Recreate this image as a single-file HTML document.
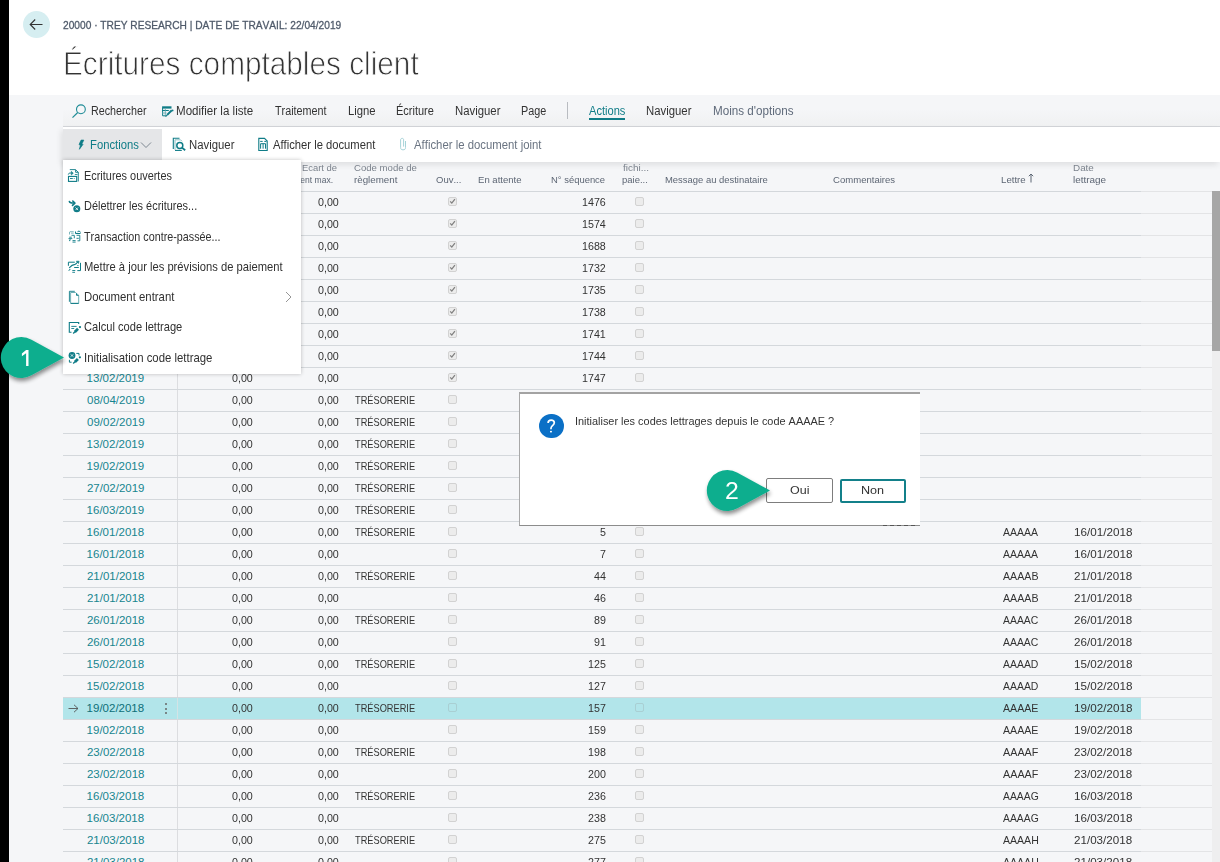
<!DOCTYPE html>
<html><head><meta charset="utf-8">
<style>
*{margin:0;padding:0;box-sizing:border-box}
html,body{width:1220px;height:862px;overflow:hidden}
body{position:relative;background:#f5f6f8;font-family:"Liberation Sans",sans-serif;color:#212121;font-kerning:none}
.abs{position:absolute}
.t{position:absolute;white-space:nowrap;transform-origin:0 0}
.mz{z-index:11}
.dz{z-index:12}
.cz{z-index:21}
#blk{position:absolute;left:0;top:0;width:9px;height:862px;background:#000;z-index:5}
#top{position:absolute;left:0;top:0;width:1220px;height:95px;background:#fff}
#back{position:absolute;left:23px;top:11px;width:27px;height:27px;border-radius:50%;background:#d6eef1;z-index:6}
#abline{position:absolute;left:63px;top:126px;width:1157px;height:1px;background:#d3d5d9}
#band{position:absolute;left:63px;top:127px;width:1157px;height:35px;background:#fff;box-shadow:-2px 3px 6px rgba(0,0,0,0.09)}
#fonc{position:absolute;left:63px;top:129px;width:99px;height:33px;background:#e5e6e8}
#hdline{position:absolute;left:63px;top:191px;width:1078px;height:1px;background:#d3d7db}
#hdline2{position:absolute;left:1141px;top:191px;width:71px;height:1px;background:#e3e4e6}
.cb{position:absolute;width:9px;height:9px;border:1px solid #d2d2d2;border-radius:2px;background:#ececec}
#vsep{position:absolute;left:177px;top:192px;width:1px;height:670px;background:#dcdde0}
#sb{position:absolute;left:1212px;top:191px;width:8px;height:160px;background:#a6a6a6}
#sbt{position:absolute;left:1212px;top:191px;width:8px;height:671px;background:#eeeeef}
#menu{position:absolute;left:63px;top:160px;width:238px;height:214px;background:#fff;box-shadow:0 0 4px rgba(0,0,0,0.24);z-index:10}
.ic{position:absolute;z-index:11}
#dlg{position:absolute;left:519px;top:392px;width:401px;height:134px;background:#fff;border-left:1px solid #a8a8a8;border-top:2px solid #a3a3a3;border-bottom:1px solid #8c8c8c;z-index:10}
#q{position:absolute;left:539.3px;top:414.1px;width:24.4px;height:24.4px;border-radius:50%;background:#0b70c6;z-index:11}
.btn{position:absolute;top:478px;height:25px;background:#fff;z-index:11;border-radius:2px}
#oui{left:766px;width:67px;border:1px solid #7d7d7d}
#non{left:840px;width:66px;top:478.5px;height:24px;border:2px solid #13808a}
.call{position:absolute;z-index:20;overflow:visible}
</style></head><body>
<div id="top"></div>
<div class="abs" style="left:63px;top:95px;width:1157px;height:31px;background:linear-gradient(#f5f6f8 0,#f5f6f8 14px,#f0f1f2 31px)"></div>
<div id="blk"></div>
<div id="back"></div>
<svg class="abs" style="left:29px;top:18px;z-index:7" width="15" height="13" viewBox="0 0 15 13"><path d="M1.2 6.5 H13.5 M6.2 1.5 L1.2 6.5 L6.2 11.5" fill="none" stroke="#333" stroke-width="1.1"/></svg>
<span class="t" style="left:63.19px;top:19.88px;font-size:11.3px;line-height:11px;transform:scaleX(0.9012);color:#4f5a6a;-webkit-text-stroke:0.3px #4f5a6a;">20000 · TREY RESEARCH | DATE DE TRAVAIL: 22/04/2019</span>
<span class="t" style="left:62.56px;top:45.72px;font-size:34px;line-height:34px;transform:scaleX(0.8754);color:#333;-webkit-text-stroke:0.9px #fff;">Écritures comptables client</span>

<!-- action bar -->
<svg class="abs" style="left:70px;top:100px" width="20" height="20" viewBox="0 0 20 20"><circle cx="10.9" cy="9.3" r="4.4" fill="none" stroke="#1f8c96" stroke-width="1.1"/><path d="M7.7 12.5 L2.5 17.7" stroke="#1f8c96" stroke-width="1.2" fill="none"/></svg>
<svg class="abs" style="left:158px;top:100px" width="20" height="20" viewBox="0 0 20 20" fill="none" stroke="#0f7c87"><rect x="4.1" y="6.3" width="9.4" height="2.3" fill="#0f7c87" stroke="none"/><path d="M4.6 8 V15.8 H8" stroke-width="1"/><path d="M4 10.5 H10.8" stroke-width="1"/><path d="M4 13 H8.5 M7.3 9 V15" stroke-width="0.8" stroke="#5ea6ad"/><path d="M9.2 14.9 L13.8 10.3" stroke-width="2"/><path d="M7.6 16.6 L9.3 14.9" stroke-width="1.1"/><circle cx="14.6" cy="10.4" r="0.9" fill="#0f7c87" stroke="none"/></svg>
<div id="abline"></div>
<div id="band"></div>
<div id="fonc"></div>
<svg class="abs" style="left:70px;top:134px" width="20" height="20" viewBox="0 0 20 20"><path d="M11.1 6.1 L13.8 6.1 L12.1 9.6 L12.9 10.5 L9.4 15.3 L10.4 11.3 L9 10.6 Z" fill="#0f7c87" stroke="#0f7c87" stroke-width="0.7" stroke-linejoin="round"/></svg>
<svg class="abs" style="left:140px;top:141px" width="12" height="8" viewBox="0 0 12 8"><path d="M1 1.5 L6 6.5 L11 1.5" fill="none" stroke="#6f7a86" stroke-width="0.9"/></svg>
<svg class="abs" style="left:168px;top:134px" width="20" height="20" viewBox="0 0 20 20" fill="none" stroke="#0f7c87"><path d="M11.5 4.3 H5.3 V15" stroke-width="1.1"/><path d="M7 15.8 V5.8 H12.5 L14 7.3" stroke-width="0.9" stroke="#7fb8be"/><path d="M7 16.4 H13.8" stroke-width="1.1"/><circle cx="11.8" cy="11.4" r="3" stroke-width="1.5"/><path d="M13.9 13.6 L17.2 16.2" stroke-width="1.8"/></svg>
<svg class="abs" style="left:252px;top:134px" width="20" height="20" viewBox="0 0 20 20" fill="none" stroke="#0f7c87"><path d="M6.8 4.4 H12.5 L15.2 7 V16.5 H6.8 Z" stroke-width="1.1"/><path d="M8.2 7.4 H10.7 M12.3 7.4 H14.5" stroke-width="1"/><path d="M8.6 14.7 V9.7 H13.5 V14.7 M11.1 9.7 V14.7" stroke-width="1"/></svg>
<svg class="abs" style="left:392px;top:134px" width="20" height="20" viewBox="0 0 20 20" fill="none" stroke="#a6d3d8" stroke-width="1"><path d="M13.5 7 V13.5 C13.5 15.5 12.5 15.8 11 15.8 C9.5 15.8 8.6 15.3 8.6 13.5 V6 C8.6 4.8 9.2 4.4 10.2 4.4 C11.2 4.4 11.6 4.9 11.6 6 V12.6"/></svg>
<span class="t" style="left:90.82px;top:105.04px;font-size:12px;line-height:12px;transform:scaleX(0.8941);color:#333;">Rechercher</span>
<span class="t" style="left:175.65px;top:105.04px;font-size:12px;line-height:12px;transform:scaleX(0.9642);color:#333;">Modifier la liste</span>
<span class="t" style="left:274.76px;top:105.04px;font-size:12px;line-height:12px;transform:scaleX(0.8983);color:#333;">Traitement</span>
<span class="t" style="left:347.87px;top:105.04px;font-size:12px;line-height:12px;transform:scaleX(0.9410);color:#333;">Ligne</span>
<span class="t" style="left:396.30px;top:105.04px;font-size:12px;line-height:12px;transform:scaleX(0.9165);color:#333;">Écriture</span>
<span class="t" style="left:455.27px;top:105.04px;font-size:12px;line-height:12px;transform:scaleX(0.9458);color:#333;">Naviguer</span>
<span class="t" style="left:521.41px;top:105.04px;font-size:12px;line-height:12px;transform:scaleX(0.9016);color:#333;">Page</span>
<span class="t" style="left:588.88px;top:105.04px;font-size:12px;line-height:12px;transform:scaleX(0.9256);color:#0f7c87;">Actions</span>
<span class="t" style="left:646.27px;top:105.04px;font-size:12px;line-height:12px;transform:scaleX(0.9458);color:#333;">Naviguer</span>
<span class="t" style="left:712.74px;top:105.04px;font-size:12px;line-height:12px;transform:scaleX(0.9708);color:#5f6a7a;">Moins d'options</span>
<span class="t" style="left:89.58px;top:139.24px;font-size:12px;line-height:12px;transform:scaleX(0.9386);color:#0f7c87;">Fonctions</span>
<span class="t" style="left:188.77px;top:139.24px;font-size:12px;line-height:12px;transform:scaleX(0.9458);color:#333;">Naviguer</span>
<span class="t" style="left:272.98px;top:139.24px;font-size:12px;line-height:12px;transform:scaleX(0.9352);color:#333;">Afficher le document</span>
<span class="t" style="left:413.78px;top:139.24px;font-size:12px;line-height:12px;transform:scaleX(0.9463);color:#6a7482;">Afficher le document joint</span>
<div class="abs" style="left:567px;top:102px;width:1px;height:17px;background:#b9bcc1"></div>
<div class="abs" style="left:589px;top:118px;width:36px;height:2px;background:#0f7c87"></div>

<!-- grid -->
<span class="t" style="left:302.13px;top:163.88px;font-size:9.3px;line-height:9px;transform:scaleX(1.0132);color:#7b828c;">Ecart de</span>
<span class="t" style="left:276.87px;top:175.88px;font-size:9.3px;line-height:9px;transform:scaleX(0.9200);color:#5d6674;">paiement max.</span>
<span class="t" style="left:354.41px;top:163.88px;font-size:9.3px;line-height:9px;transform:scaleX(1.0312);color:#7b828c;">Code mode de</span>
<span class="t" style="left:354.25px;top:175.88px;font-size:9.3px;line-height:9px;transform:scaleX(1.0499);color:#5d6674;">règlement</span>
<span class="t" style="left:435.55px;top:175.88px;font-size:9.3px;line-height:9px;transform:scaleX(1.0205);color:#5d6674;">Ouv...</span>
<span class="t" style="left:478.12px;top:175.88px;font-size:9.3px;line-height:9px;transform:scaleX(1.0285);color:#5d6674;">En attente</span>
<span class="t" style="left:551.03px;top:175.88px;font-size:9.3px;line-height:9px;transform:scaleX(1.0139);color:#5d6674;">N° séquence</span>
<span class="t" style="left:622.86px;top:163.88px;font-size:9.3px;line-height:9px;transform:scaleX(1.0725);color:#7b828c;">fichi...</span>
<span class="t" style="left:622.39px;top:175.88px;font-size:9.3px;line-height:9px;transform:scaleX(1.0215);color:#5d6674;">paie...</span>
<span class="t" style="left:665.43px;top:175.88px;font-size:9.3px;line-height:9px;transform:scaleX(1.0145);color:#5d6674;">Message au destinataire</span>
<span class="t" style="left:832.91px;top:175.88px;font-size:9.3px;line-height:9px;transform:scaleX(1.0275);color:#5d6674;">Commentaires</span>
<span class="t" style="left:1001.21px;top:175.88px;font-size:9.3px;line-height:9px;transform:scaleX(1.0396);color:#5d6674;">Lettre</span>
<svg class="abs" style="left:1028px;top:173px" width="6" height="10" viewBox="0 0 6 10"><path d="M3 9.5 V1 M0.8 3.2 L3 1 L5.2 3.2" fill="none" stroke="#5d6674" stroke-width="1"/></svg>
<span class="t" style="left:1072.89px;top:163.88px;font-size:9.3px;line-height:9px;transform:scaleX(1.0613);color:#7b828c;">Date</span>
<span class="t" style="left:1073.03px;top:175.88px;font-size:9.3px;line-height:9px;transform:scaleX(1.0674);color:#5d6674;">lettrage</span>
<div id="hdline"></div><div id="hdline2"></div>
<div id="sbt"></div>
<div id="sb"></div>
<div id="vsep"></div>
<div class="abs" style="left:63px;top:698px;width:1078px;height:21px;background:#b2e5ea"></div>
<div class="abs" style="left:63px;top:213px;width:1078px;height:1px;background:#d4d8dc"></div>
<div class="abs" style="left:1141px;top:213px;width:71px;height:1px;background:#e3e4e6"></div>
<div class="abs" style="left:63px;top:235px;width:1078px;height:1px;background:#d4d8dc"></div>
<div class="abs" style="left:1141px;top:235px;width:71px;height:1px;background:#e3e4e6"></div>
<div class="abs" style="left:63px;top:257px;width:1078px;height:1px;background:#d4d8dc"></div>
<div class="abs" style="left:1141px;top:257px;width:71px;height:1px;background:#e3e4e6"></div>
<div class="abs" style="left:63px;top:279px;width:1078px;height:1px;background:#d4d8dc"></div>
<div class="abs" style="left:1141px;top:279px;width:71px;height:1px;background:#e3e4e6"></div>
<div class="abs" style="left:63px;top:301px;width:1078px;height:1px;background:#d4d8dc"></div>
<div class="abs" style="left:1141px;top:301px;width:71px;height:1px;background:#e3e4e6"></div>
<div class="abs" style="left:63px;top:323px;width:1078px;height:1px;background:#d4d8dc"></div>
<div class="abs" style="left:1141px;top:323px;width:71px;height:1px;background:#e3e4e6"></div>
<div class="abs" style="left:63px;top:345px;width:1078px;height:1px;background:#d4d8dc"></div>
<div class="abs" style="left:1141px;top:345px;width:71px;height:1px;background:#e3e4e6"></div>
<div class="abs" style="left:63px;top:367px;width:1078px;height:1px;background:#d4d8dc"></div>
<div class="abs" style="left:1141px;top:367px;width:71px;height:1px;background:#e3e4e6"></div>
<div class="abs" style="left:63px;top:389px;width:1078px;height:1px;background:#d4d8dc"></div>
<div class="abs" style="left:1141px;top:389px;width:71px;height:1px;background:#e3e4e6"></div>
<div class="abs" style="left:63px;top:411px;width:1078px;height:1px;background:#d4d8dc"></div>
<div class="abs" style="left:1141px;top:411px;width:71px;height:1px;background:#e3e4e6"></div>
<div class="abs" style="left:63px;top:433px;width:1078px;height:1px;background:#d4d8dc"></div>
<div class="abs" style="left:1141px;top:433px;width:71px;height:1px;background:#e3e4e6"></div>
<div class="abs" style="left:63px;top:455px;width:1078px;height:1px;background:#d4d8dc"></div>
<div class="abs" style="left:1141px;top:455px;width:71px;height:1px;background:#e3e4e6"></div>
<div class="abs" style="left:63px;top:477px;width:1078px;height:1px;background:#d4d8dc"></div>
<div class="abs" style="left:1141px;top:477px;width:71px;height:1px;background:#e3e4e6"></div>
<div class="abs" style="left:63px;top:499px;width:1078px;height:1px;background:#d4d8dc"></div>
<div class="abs" style="left:1141px;top:499px;width:71px;height:1px;background:#e3e4e6"></div>
<div class="abs" style="left:63px;top:521px;width:1078px;height:1px;background:#d4d8dc"></div>
<div class="abs" style="left:1141px;top:521px;width:71px;height:1px;background:#e3e4e6"></div>
<div class="abs" style="left:63px;top:543px;width:1078px;height:1px;background:#d4d8dc"></div>
<div class="abs" style="left:1141px;top:543px;width:71px;height:1px;background:#e3e4e6"></div>
<div class="abs" style="left:63px;top:565px;width:1078px;height:1px;background:#d4d8dc"></div>
<div class="abs" style="left:1141px;top:565px;width:71px;height:1px;background:#e3e4e6"></div>
<div class="abs" style="left:63px;top:587px;width:1078px;height:1px;background:#d4d8dc"></div>
<div class="abs" style="left:1141px;top:587px;width:71px;height:1px;background:#e3e4e6"></div>
<div class="abs" style="left:63px;top:609px;width:1078px;height:1px;background:#d4d8dc"></div>
<div class="abs" style="left:1141px;top:609px;width:71px;height:1px;background:#e3e4e6"></div>
<div class="abs" style="left:63px;top:631px;width:1078px;height:1px;background:#d4d8dc"></div>
<div class="abs" style="left:1141px;top:631px;width:71px;height:1px;background:#e3e4e6"></div>
<div class="abs" style="left:63px;top:653px;width:1078px;height:1px;background:#d4d8dc"></div>
<div class="abs" style="left:1141px;top:653px;width:71px;height:1px;background:#e3e4e6"></div>
<div class="abs" style="left:63px;top:675px;width:1078px;height:1px;background:#d4d8dc"></div>
<div class="abs" style="left:1141px;top:675px;width:71px;height:1px;background:#e3e4e6"></div>
<div class="abs" style="left:63px;top:697px;width:1078px;height:1px;background:#d4d8dc"></div>
<div class="abs" style="left:1141px;top:697px;width:71px;height:1px;background:#e3e4e6"></div>
<div class="abs" style="left:63px;top:719px;width:1078px;height:1px;background:#d4d8dc"></div>
<div class="abs" style="left:1141px;top:719px;width:71px;height:1px;background:#e3e4e6"></div>
<div class="abs" style="left:63px;top:741px;width:1078px;height:1px;background:#d4d8dc"></div>
<div class="abs" style="left:1141px;top:741px;width:71px;height:1px;background:#e3e4e6"></div>
<div class="abs" style="left:63px;top:763px;width:1078px;height:1px;background:#d4d8dc"></div>
<div class="abs" style="left:1141px;top:763px;width:71px;height:1px;background:#e3e4e6"></div>
<div class="abs" style="left:63px;top:785px;width:1078px;height:1px;background:#d4d8dc"></div>
<div class="abs" style="left:1141px;top:785px;width:71px;height:1px;background:#e3e4e6"></div>
<div class="abs" style="left:63px;top:807px;width:1078px;height:1px;background:#d4d8dc"></div>
<div class="abs" style="left:1141px;top:807px;width:71px;height:1px;background:#e3e4e6"></div>
<div class="abs" style="left:63px;top:829px;width:1078px;height:1px;background:#d4d8dc"></div>
<div class="abs" style="left:1141px;top:829px;width:71px;height:1px;background:#e3e4e6"></div>
<div class="abs" style="left:63px;top:851px;width:1078px;height:1px;background:#d4d8dc"></div>
<div class="abs" style="left:1141px;top:851px;width:71px;height:1px;background:#e3e4e6"></div>
<div class="abs" style="left:63px;top:873px;width:1078px;height:1px;background:#d4d8dc"></div>
<div class="abs" style="left:1141px;top:873px;width:71px;height:1px;background:#e3e4e6"></div>
<span class="t" style="left:231.60px;top:195.72px;font-size:11.5px;line-height:12px;transform:scaleX(0.9300);color:#333333;">0,00</span>
<span class="t" style="left:317.60px;top:195.72px;font-size:11.5px;line-height:12px;transform:scaleX(0.9300);color:#333333;">0,00</span>
<div class="cb" style="left:448px;top:196.5px"><svg width="9" height="9" viewBox="0 0 9 9" style="position:absolute;left:-1px;top:-1px"><path d="M2.2 4.4 L3.8 6.1 L6.9 2.2" fill="none" stroke="#808080" stroke-width="1.3"/></svg></div>
<span class="t" style="left:582.38px;top:195.72px;font-size:11.5px;line-height:12px;transform:scaleX(0.9300);color:#333333;">1476</span>
<div class="cb" style="left:635px;top:196.5px"></div>
<span class="t" style="left:231.60px;top:217.72px;font-size:11.5px;line-height:12px;transform:scaleX(0.9300);color:#333333;">0,00</span>
<span class="t" style="left:317.60px;top:217.72px;font-size:11.5px;line-height:12px;transform:scaleX(0.9300);color:#333333;">0,00</span>
<div class="cb" style="left:448px;top:218.5px"><svg width="9" height="9" viewBox="0 0 9 9" style="position:absolute;left:-1px;top:-1px"><path d="M2.2 4.4 L3.8 6.1 L6.9 2.2" fill="none" stroke="#808080" stroke-width="1.3"/></svg></div>
<span class="t" style="left:582.22px;top:217.72px;font-size:11.5px;line-height:12px;transform:scaleX(0.9300);color:#333333;">1574</span>
<div class="cb" style="left:635px;top:218.5px"></div>
<span class="t" style="left:231.60px;top:239.72px;font-size:11.5px;line-height:12px;transform:scaleX(0.9300);color:#333333;">0,00</span>
<span class="t" style="left:317.60px;top:239.72px;font-size:11.5px;line-height:12px;transform:scaleX(0.9300);color:#333333;">0,00</span>
<div class="cb" style="left:448px;top:240.5px"><svg width="9" height="9" viewBox="0 0 9 9" style="position:absolute;left:-1px;top:-1px"><path d="M2.2 4.4 L3.8 6.1 L6.9 2.2" fill="none" stroke="#808080" stroke-width="1.3"/></svg></div>
<span class="t" style="left:582.37px;top:239.72px;font-size:11.5px;line-height:12px;transform:scaleX(0.9300);color:#333333;">1688</span>
<div class="cb" style="left:635px;top:240.5px"></div>
<span class="t" style="left:231.60px;top:261.72px;font-size:11.5px;line-height:12px;transform:scaleX(0.9300);color:#333333;">0,00</span>
<span class="t" style="left:317.60px;top:261.72px;font-size:11.5px;line-height:12px;transform:scaleX(0.9300);color:#333333;">0,00</span>
<div class="cb" style="left:448px;top:262.5px"><svg width="9" height="9" viewBox="0 0 9 9" style="position:absolute;left:-1px;top:-1px"><path d="M2.2 4.4 L3.8 6.1 L6.9 2.2" fill="none" stroke="#808080" stroke-width="1.3"/></svg></div>
<span class="t" style="left:582.45px;top:261.72px;font-size:11.5px;line-height:12px;transform:scaleX(0.9300);color:#333333;">1732</span>
<div class="cb" style="left:635px;top:262.5px"></div>
<span class="t" style="left:231.60px;top:283.72px;font-size:11.5px;line-height:12px;transform:scaleX(0.9300);color:#333333;">0,00</span>
<span class="t" style="left:317.60px;top:283.72px;font-size:11.5px;line-height:12px;transform:scaleX(0.9300);color:#333333;">0,00</span>
<div class="cb" style="left:448px;top:284.5px"><svg width="9" height="9" viewBox="0 0 9 9" style="position:absolute;left:-1px;top:-1px"><path d="M2.2 4.4 L3.8 6.1 L6.9 2.2" fill="none" stroke="#808080" stroke-width="1.3"/></svg></div>
<span class="t" style="left:582.36px;top:283.72px;font-size:11.5px;line-height:12px;transform:scaleX(0.9300);color:#333333;">1735</span>
<div class="cb" style="left:635px;top:284.5px"></div>
<span class="t" style="left:231.60px;top:305.72px;font-size:11.5px;line-height:12px;transform:scaleX(0.9300);color:#333333;">0,00</span>
<span class="t" style="left:317.60px;top:305.72px;font-size:11.5px;line-height:12px;transform:scaleX(0.9300);color:#333333;">0,00</span>
<div class="cb" style="left:448px;top:306.5px"><svg width="9" height="9" viewBox="0 0 9 9" style="position:absolute;left:-1px;top:-1px"><path d="M2.2 4.4 L3.8 6.1 L6.9 2.2" fill="none" stroke="#808080" stroke-width="1.3"/></svg></div>
<span class="t" style="left:582.37px;top:305.72px;font-size:11.5px;line-height:12px;transform:scaleX(0.9300);color:#333333;">1738</span>
<div class="cb" style="left:635px;top:306.5px"></div>
<span class="t" style="left:231.60px;top:327.72px;font-size:11.5px;line-height:12px;transform:scaleX(0.9300);color:#333333;">0,00</span>
<span class="t" style="left:317.60px;top:327.72px;font-size:11.5px;line-height:12px;transform:scaleX(0.9300);color:#333333;">0,00</span>
<div class="cb" style="left:448px;top:328.5px"><svg width="9" height="9" viewBox="0 0 9 9" style="position:absolute;left:-1px;top:-1px"><path d="M2.2 4.4 L3.8 6.1 L6.9 2.2" fill="none" stroke="#808080" stroke-width="1.3"/></svg></div>
<span class="t" style="left:582.43px;top:327.72px;font-size:11.5px;line-height:12px;transform:scaleX(0.9300);color:#333333;">1741</span>
<div class="cb" style="left:635px;top:328.5px"></div>
<span class="t" style="left:231.60px;top:349.72px;font-size:11.5px;line-height:12px;transform:scaleX(0.9300);color:#333333;">0,00</span>
<span class="t" style="left:317.60px;top:349.72px;font-size:11.5px;line-height:12px;transform:scaleX(0.9300);color:#333333;">0,00</span>
<div class="cb" style="left:448px;top:350.5px"><svg width="9" height="9" viewBox="0 0 9 9" style="position:absolute;left:-1px;top:-1px"><path d="M2.2 4.4 L3.8 6.1 L6.9 2.2" fill="none" stroke="#808080" stroke-width="1.3"/></svg></div>
<span class="t" style="left:582.22px;top:349.72px;font-size:11.5px;line-height:12px;transform:scaleX(0.9300);color:#333333;">1744</span>
<div class="cb" style="left:635px;top:350.5px"></div>
<span class="t" style="left:86.62px;top:371.72px;font-size:11.5px;line-height:12px;color:#15858f;">13/02/2019</span>
<span class="t" style="left:231.60px;top:371.72px;font-size:11.5px;line-height:12px;transform:scaleX(0.9300);color:#333333;">0,00</span>
<span class="t" style="left:317.60px;top:371.72px;font-size:11.5px;line-height:12px;transform:scaleX(0.9300);color:#333333;">0,00</span>
<div class="cb" style="left:448px;top:372.5px"><svg width="9" height="9" viewBox="0 0 9 9" style="position:absolute;left:-1px;top:-1px"><path d="M2.2 4.4 L3.8 6.1 L6.9 2.2" fill="none" stroke="#808080" stroke-width="1.3"/></svg></div>
<span class="t" style="left:582.45px;top:371.72px;font-size:11.5px;line-height:12px;transform:scaleX(0.9300);color:#333333;">1747</span>
<div class="cb" style="left:635px;top:372.5px"></div>
<span class="t" style="left:87.05px;top:393.72px;font-size:11.5px;line-height:12px;color:#15858f;">08/04/2019</span>
<span class="t" style="left:231.60px;top:393.72px;font-size:11.5px;line-height:12px;transform:scaleX(0.9300);color:#333333;">0,00</span>
<span class="t" style="left:317.60px;top:393.72px;font-size:11.5px;line-height:12px;transform:scaleX(0.9300);color:#333333;">0,00</span>
<span class="t" style="left:355.29px;top:393.72px;font-size:11.5px;line-height:12px;transform:scaleX(0.8040);color:#333333;">TRÉSORERIE</span>
<div class="cb" style="left:448px;top:394.5px"></div>
<div class="cb" style="left:635px;top:394.5px"></div>
<span class="t" style="left:87.05px;top:415.72px;font-size:11.5px;line-height:12px;color:#15858f;">09/02/2019</span>
<span class="t" style="left:231.60px;top:415.72px;font-size:11.5px;line-height:12px;transform:scaleX(0.9300);color:#333333;">0,00</span>
<span class="t" style="left:317.60px;top:415.72px;font-size:11.5px;line-height:12px;transform:scaleX(0.9300);color:#333333;">0,00</span>
<span class="t" style="left:355.29px;top:415.72px;font-size:11.5px;line-height:12px;transform:scaleX(0.8040);color:#333333;">TRÉSORERIE</span>
<div class="cb" style="left:448px;top:416.5px"></div>
<div class="cb" style="left:635px;top:416.5px"></div>
<span class="t" style="left:86.62px;top:437.72px;font-size:11.5px;line-height:12px;color:#15858f;">13/02/2019</span>
<span class="t" style="left:231.60px;top:437.72px;font-size:11.5px;line-height:12px;transform:scaleX(0.9300);color:#333333;">0,00</span>
<span class="t" style="left:317.60px;top:437.72px;font-size:11.5px;line-height:12px;transform:scaleX(0.9300);color:#333333;">0,00</span>
<span class="t" style="left:355.29px;top:437.72px;font-size:11.5px;line-height:12px;transform:scaleX(0.8040);color:#333333;">TRÉSORERIE</span>
<div class="cb" style="left:448px;top:438.5px"></div>
<div class="cb" style="left:635px;top:438.5px"></div>
<span class="t" style="left:86.62px;top:459.72px;font-size:11.5px;line-height:12px;color:#15858f;">19/02/2019</span>
<span class="t" style="left:231.60px;top:459.72px;font-size:11.5px;line-height:12px;transform:scaleX(0.9300);color:#333333;">0,00</span>
<span class="t" style="left:317.60px;top:459.72px;font-size:11.5px;line-height:12px;transform:scaleX(0.9300);color:#333333;">0,00</span>
<span class="t" style="left:355.29px;top:459.72px;font-size:11.5px;line-height:12px;transform:scaleX(0.8040);color:#333333;">TRÉSORERIE</span>
<div class="cb" style="left:448px;top:460.5px"></div>
<div class="cb" style="left:635px;top:460.5px"></div>
<span class="t" style="left:86.92px;top:481.72px;font-size:11.5px;line-height:12px;color:#15858f;">27/02/2019</span>
<span class="t" style="left:231.60px;top:481.72px;font-size:11.5px;line-height:12px;transform:scaleX(0.9300);color:#333333;">0,00</span>
<span class="t" style="left:317.60px;top:481.72px;font-size:11.5px;line-height:12px;transform:scaleX(0.9300);color:#333333;">0,00</span>
<span class="t" style="left:355.29px;top:481.72px;font-size:11.5px;line-height:12px;transform:scaleX(0.8040);color:#333333;">TRÉSORERIE</span>
<div class="cb" style="left:448px;top:482.5px"></div>
<div class="cb" style="left:635px;top:482.5px"></div>
<span class="t" style="left:86.62px;top:503.72px;font-size:11.5px;line-height:12px;color:#15858f;">16/03/2019</span>
<span class="t" style="left:231.60px;top:503.72px;font-size:11.5px;line-height:12px;transform:scaleX(0.9300);color:#333333;">0,00</span>
<span class="t" style="left:317.60px;top:503.72px;font-size:11.5px;line-height:12px;transform:scaleX(0.9300);color:#333333;">0,00</span>
<span class="t" style="left:355.29px;top:503.72px;font-size:11.5px;line-height:12px;transform:scaleX(0.8040);color:#333333;">TRÉSORERIE</span>
<div class="cb" style="left:448px;top:504.5px"></div>
<div class="cb" style="left:635px;top:504.5px"></div>
<span class="t" style="left:86.62px;top:525.72px;font-size:11.5px;line-height:12px;color:#15858f;">16/01/2018</span>
<span class="t" style="left:231.60px;top:525.72px;font-size:11.5px;line-height:12px;transform:scaleX(0.9300);color:#333333;">0,00</span>
<span class="t" style="left:317.60px;top:525.72px;font-size:11.5px;line-height:12px;transform:scaleX(0.9300);color:#333333;">0,00</span>
<span class="t" style="left:355.29px;top:525.72px;font-size:11.5px;line-height:12px;transform:scaleX(0.8040);color:#333333;">TRÉSORERIE</span>
<div class="cb" style="left:448px;top:526.5px"></div>
<span class="t" style="left:600.20px;top:525.72px;font-size:11.5px;line-height:12px;transform:scaleX(0.9300);color:#333333;">5</span>
<div class="cb" style="left:635px;top:526.5px"></div>
<span class="t" style="left:1002.88px;top:525.72px;font-size:11.5px;line-height:12px;transform:scaleX(0.9111);color:#333333;">AAAAA</span>
<span class="t" style="left:1073.61px;top:525.72px;font-size:11.5px;line-height:12px;transform:scaleX(1.0146);color:#333333;">16/01/2018</span>
<span class="t" style="left:86.62px;top:547.72px;font-size:11.5px;line-height:12px;color:#15858f;">16/01/2018</span>
<span class="t" style="left:231.60px;top:547.72px;font-size:11.5px;line-height:12px;transform:scaleX(0.9300);color:#333333;">0,00</span>
<span class="t" style="left:317.60px;top:547.72px;font-size:11.5px;line-height:12px;transform:scaleX(0.9300);color:#333333;">0,00</span>
<div class="cb" style="left:448px;top:548.5px"></div>
<span class="t" style="left:600.29px;top:547.72px;font-size:11.5px;line-height:12px;transform:scaleX(0.9300);color:#333333;">7</span>
<div class="cb" style="left:635px;top:548.5px"></div>
<span class="t" style="left:1002.88px;top:547.72px;font-size:11.5px;line-height:12px;transform:scaleX(0.9111);color:#333333;">AAAAA</span>
<span class="t" style="left:1073.61px;top:547.72px;font-size:11.5px;line-height:12px;transform:scaleX(1.0146);color:#333333;">16/01/2018</span>
<span class="t" style="left:86.92px;top:569.72px;font-size:11.5px;line-height:12px;color:#15858f;">21/01/2018</span>
<span class="t" style="left:231.60px;top:569.72px;font-size:11.5px;line-height:12px;transform:scaleX(0.9300);color:#333333;">0,00</span>
<span class="t" style="left:317.60px;top:569.72px;font-size:11.5px;line-height:12px;transform:scaleX(0.9300);color:#333333;">0,00</span>
<span class="t" style="left:355.29px;top:569.72px;font-size:11.5px;line-height:12px;transform:scaleX(0.8040);color:#333333;">TRÉSORERIE</span>
<div class="cb" style="left:448px;top:570.5px"></div>
<span class="t" style="left:594.12px;top:569.72px;font-size:11.5px;line-height:12px;transform:scaleX(0.9300);color:#333333;">44</span>
<div class="cb" style="left:635px;top:570.5px"></div>
<span class="t" style="left:1002.88px;top:569.72px;font-size:11.5px;line-height:12px;transform:scaleX(0.9252);color:#333333;">AAAAB</span>
<span class="t" style="left:1073.92px;top:569.72px;font-size:11.5px;line-height:12px;transform:scaleX(1.0092);color:#333333;">21/01/2018</span>
<span class="t" style="left:86.92px;top:591.72px;font-size:11.5px;line-height:12px;color:#15858f;">21/01/2018</span>
<span class="t" style="left:231.60px;top:591.72px;font-size:11.5px;line-height:12px;transform:scaleX(0.9300);color:#333333;">0,00</span>
<span class="t" style="left:317.60px;top:591.72px;font-size:11.5px;line-height:12px;transform:scaleX(0.9300);color:#333333;">0,00</span>
<div class="cb" style="left:448px;top:592.5px"></div>
<span class="t" style="left:594.27px;top:591.72px;font-size:11.5px;line-height:12px;transform:scaleX(0.9300);color:#333333;">46</span>
<div class="cb" style="left:635px;top:592.5px"></div>
<span class="t" style="left:1002.88px;top:591.72px;font-size:11.5px;line-height:12px;transform:scaleX(0.9252);color:#333333;">AAAAB</span>
<span class="t" style="left:1073.92px;top:591.72px;font-size:11.5px;line-height:12px;transform:scaleX(1.0092);color:#333333;">21/01/2018</span>
<span class="t" style="left:86.92px;top:613.72px;font-size:11.5px;line-height:12px;color:#15858f;">26/01/2018</span>
<span class="t" style="left:231.60px;top:613.72px;font-size:11.5px;line-height:12px;transform:scaleX(0.9300);color:#333333;">0,00</span>
<span class="t" style="left:317.60px;top:613.72px;font-size:11.5px;line-height:12px;transform:scaleX(0.9300);color:#333333;">0,00</span>
<span class="t" style="left:355.29px;top:613.72px;font-size:11.5px;line-height:12px;transform:scaleX(0.8040);color:#333333;">TRÉSORERIE</span>
<div class="cb" style="left:448px;top:614.5px"></div>
<span class="t" style="left:594.31px;top:613.72px;font-size:11.5px;line-height:12px;transform:scaleX(0.9300);color:#333333;">89</span>
<div class="cb" style="left:635px;top:614.5px"></div>
<span class="t" style="left:1002.88px;top:613.72px;font-size:11.5px;line-height:12px;transform:scaleX(0.9059);color:#333333;">AAAAC</span>
<span class="t" style="left:1073.92px;top:613.72px;font-size:11.5px;line-height:12px;transform:scaleX(1.0092);color:#333333;">26/01/2018</span>
<span class="t" style="left:86.92px;top:635.72px;font-size:11.5px;line-height:12px;color:#15858f;">26/01/2018</span>
<span class="t" style="left:231.60px;top:635.72px;font-size:11.5px;line-height:12px;transform:scaleX(0.9300);color:#333333;">0,00</span>
<span class="t" style="left:317.60px;top:635.72px;font-size:11.5px;line-height:12px;transform:scaleX(0.9300);color:#333333;">0,00</span>
<div class="cb" style="left:448px;top:636.5px"></div>
<span class="t" style="left:594.33px;top:635.72px;font-size:11.5px;line-height:12px;transform:scaleX(0.9300);color:#333333;">91</span>
<div class="cb" style="left:635px;top:636.5px"></div>
<span class="t" style="left:1002.88px;top:635.72px;font-size:11.5px;line-height:12px;transform:scaleX(0.9059);color:#333333;">AAAAC</span>
<span class="t" style="left:1073.92px;top:635.72px;font-size:11.5px;line-height:12px;transform:scaleX(1.0092);color:#333333;">26/01/2018</span>
<span class="t" style="left:86.62px;top:657.72px;font-size:11.5px;line-height:12px;color:#15858f;">15/02/2018</span>
<span class="t" style="left:231.60px;top:657.72px;font-size:11.5px;line-height:12px;transform:scaleX(0.9300);color:#333333;">0,00</span>
<span class="t" style="left:317.60px;top:657.72px;font-size:11.5px;line-height:12px;transform:scaleX(0.9300);color:#333333;">0,00</span>
<span class="t" style="left:355.29px;top:657.72px;font-size:11.5px;line-height:12px;transform:scaleX(0.8040);color:#333333;">TRÉSORERIE</span>
<div class="cb" style="left:448px;top:658.5px"></div>
<span class="t" style="left:588.30px;top:657.72px;font-size:11.5px;line-height:12px;transform:scaleX(0.9300);color:#333333;">125</span>
<div class="cb" style="left:635px;top:658.5px"></div>
<span class="t" style="left:1002.88px;top:657.72px;font-size:11.5px;line-height:12px;transform:scaleX(0.9085);color:#333333;">AAAAD</span>
<span class="t" style="left:1073.61px;top:657.72px;font-size:11.5px;line-height:12px;transform:scaleX(1.0146);color:#333333;">15/02/2018</span>
<span class="t" style="left:86.62px;top:679.72px;font-size:11.5px;line-height:12px;color:#15858f;">15/02/2018</span>
<span class="t" style="left:231.60px;top:679.72px;font-size:11.5px;line-height:12px;transform:scaleX(0.9300);color:#333333;">0,00</span>
<span class="t" style="left:317.60px;top:679.72px;font-size:11.5px;line-height:12px;transform:scaleX(0.9300);color:#333333;">0,00</span>
<div class="cb" style="left:448px;top:680.5px"></div>
<span class="t" style="left:588.39px;top:679.72px;font-size:11.5px;line-height:12px;transform:scaleX(0.9300);color:#333333;">127</span>
<div class="cb" style="left:635px;top:680.5px"></div>
<span class="t" style="left:1002.88px;top:679.72px;font-size:11.5px;line-height:12px;transform:scaleX(0.9085);color:#333333;">AAAAD</span>
<span class="t" style="left:1073.61px;top:679.72px;font-size:11.5px;line-height:12px;transform:scaleX(1.0146);color:#333333;">15/02/2018</span>
<svg class="abs" style="left:68px;top:704px" width="11" height="9" viewBox="0 0 11 9"><path d="M0.5 4.5 H10 M6 0.8 L10 4.5 L6 8.2" fill="none" stroke="#555" stroke-width="0.9"/></svg>
<div class="abs" style="left:177px;top:698px;width:1px;height:21px;background:#d4e3e5"></div>
<div class="abs" style="left:165px;top:703px;width:2px;height:2px;background:#666;border-radius:1px"></div>
<div class="abs" style="left:165px;top:707.5px;width:2px;height:2px;background:#666;border-radius:1px"></div>
<div class="abs" style="left:165px;top:712px;width:2px;height:2px;background:#666;border-radius:1px"></div>
<span class="t" style="left:86.62px;top:701.72px;font-size:11.5px;line-height:12px;color:#0d6f78;">19/02/2018</span>
<span class="t" style="left:231.60px;top:701.72px;font-size:11.5px;line-height:12px;transform:scaleX(0.9300);color:#333333;">0,00</span>
<span class="t" style="left:317.60px;top:701.72px;font-size:11.5px;line-height:12px;transform:scaleX(0.9300);color:#333333;">0,00</span>
<span class="t" style="left:355.29px;top:701.72px;font-size:11.5px;line-height:12px;transform:scaleX(0.8040);color:#333333;">TRÉSORERIE</span>
<div class="cb" style="left:448px;top:702.5px;background:transparent;border-color:#a9cfd3"></div>
<span class="t" style="left:588.39px;top:701.72px;font-size:11.5px;line-height:12px;transform:scaleX(0.9300);color:#333333;">157</span>
<div class="cb" style="left:635px;top:702.5px;background:transparent;border-color:#a9cfd3"></div>
<span class="t" style="left:1002.88px;top:701.72px;font-size:11.5px;line-height:12px;transform:scaleX(0.9224);color:#333333;">AAAAE</span>
<span class="t" style="left:1073.61px;top:701.72px;font-size:11.5px;line-height:12px;transform:scaleX(1.0146);color:#333333;">19/02/2018</span>
<span class="t" style="left:86.62px;top:723.72px;font-size:11.5px;line-height:12px;color:#15858f;">19/02/2018</span>
<span class="t" style="left:231.60px;top:723.72px;font-size:11.5px;line-height:12px;transform:scaleX(0.9300);color:#333333;">0,00</span>
<span class="t" style="left:317.60px;top:723.72px;font-size:11.5px;line-height:12px;transform:scaleX(0.9300);color:#333333;">0,00</span>
<div class="cb" style="left:448px;top:724.5px"></div>
<span class="t" style="left:588.36px;top:723.72px;font-size:11.5px;line-height:12px;transform:scaleX(0.9300);color:#333333;">159</span>
<div class="cb" style="left:635px;top:724.5px"></div>
<span class="t" style="left:1002.88px;top:723.72px;font-size:11.5px;line-height:12px;transform:scaleX(0.9224);color:#333333;">AAAAE</span>
<span class="t" style="left:1073.61px;top:723.72px;font-size:11.5px;line-height:12px;transform:scaleX(1.0146);color:#333333;">19/02/2018</span>
<span class="t" style="left:86.92px;top:745.72px;font-size:11.5px;line-height:12px;color:#15858f;">23/02/2018</span>
<span class="t" style="left:231.60px;top:745.72px;font-size:11.5px;line-height:12px;transform:scaleX(0.9300);color:#333333;">0,00</span>
<span class="t" style="left:317.60px;top:745.72px;font-size:11.5px;line-height:12px;transform:scaleX(0.9300);color:#333333;">0,00</span>
<span class="t" style="left:355.29px;top:745.72px;font-size:11.5px;line-height:12px;transform:scaleX(0.8040);color:#333333;">TRÉSORERIE</span>
<div class="cb" style="left:448px;top:746.5px"></div>
<span class="t" style="left:588.32px;top:745.72px;font-size:11.5px;line-height:12px;transform:scaleX(0.9300);color:#333333;">198</span>
<div class="cb" style="left:635px;top:746.5px"></div>
<span class="t" style="left:1002.88px;top:745.72px;font-size:11.5px;line-height:12px;transform:scaleX(0.9376);color:#333333;">AAAAF</span>
<span class="t" style="left:1073.92px;top:745.72px;font-size:11.5px;line-height:12px;transform:scaleX(1.0092);color:#333333;">23/02/2018</span>
<span class="t" style="left:86.92px;top:767.72px;font-size:11.5px;line-height:12px;color:#15858f;">23/02/2018</span>
<span class="t" style="left:231.60px;top:767.72px;font-size:11.5px;line-height:12px;transform:scaleX(0.9300);color:#333333;">0,00</span>
<span class="t" style="left:317.60px;top:767.72px;font-size:11.5px;line-height:12px;transform:scaleX(0.9300);color:#333333;">0,00</span>
<div class="cb" style="left:448px;top:768.5px"></div>
<span class="t" style="left:588.27px;top:767.72px;font-size:11.5px;line-height:12px;transform:scaleX(0.9300);color:#333333;">200</span>
<div class="cb" style="left:635px;top:768.5px"></div>
<span class="t" style="left:1002.88px;top:767.72px;font-size:11.5px;line-height:12px;transform:scaleX(0.9376);color:#333333;">AAAAF</span>
<span class="t" style="left:1073.92px;top:767.72px;font-size:11.5px;line-height:12px;transform:scaleX(1.0092);color:#333333;">23/02/2018</span>
<span class="t" style="left:86.62px;top:789.72px;font-size:11.5px;line-height:12px;color:#15858f;">16/03/2018</span>
<span class="t" style="left:231.60px;top:789.72px;font-size:11.5px;line-height:12px;transform:scaleX(0.9300);color:#333333;">0,00</span>
<span class="t" style="left:317.60px;top:789.72px;font-size:11.5px;line-height:12px;transform:scaleX(0.9300);color:#333333;">0,00</span>
<span class="t" style="left:355.29px;top:789.72px;font-size:11.5px;line-height:12px;transform:scaleX(0.8040);color:#333333;">TRÉSORERIE</span>
<div class="cb" style="left:448px;top:790.5px"></div>
<span class="t" style="left:588.33px;top:789.72px;font-size:11.5px;line-height:12px;transform:scaleX(0.9300);color:#333333;">236</span>
<div class="cb" style="left:635px;top:790.5px"></div>
<span class="t" style="left:1002.88px;top:789.72px;font-size:11.5px;line-height:12px;transform:scaleX(0.9008);color:#333333;">AAAAG</span>
<span class="t" style="left:1073.61px;top:789.72px;font-size:11.5px;line-height:12px;transform:scaleX(1.0146);color:#333333;">16/03/2018</span>
<span class="t" style="left:86.62px;top:811.72px;font-size:11.5px;line-height:12px;color:#15858f;">16/03/2018</span>
<span class="t" style="left:231.60px;top:811.72px;font-size:11.5px;line-height:12px;transform:scaleX(0.9300);color:#333333;">0,00</span>
<span class="t" style="left:317.60px;top:811.72px;font-size:11.5px;line-height:12px;transform:scaleX(0.9300);color:#333333;">0,00</span>
<div class="cb" style="left:448px;top:812.5px"></div>
<span class="t" style="left:588.32px;top:811.72px;font-size:11.5px;line-height:12px;transform:scaleX(0.9300);color:#333333;">238</span>
<div class="cb" style="left:635px;top:812.5px"></div>
<span class="t" style="left:1002.88px;top:811.72px;font-size:11.5px;line-height:12px;transform:scaleX(0.9008);color:#333333;">AAAAG</span>
<span class="t" style="left:1073.61px;top:811.72px;font-size:11.5px;line-height:12px;transform:scaleX(1.0146);color:#333333;">16/03/2018</span>
<span class="t" style="left:86.92px;top:833.72px;font-size:11.5px;line-height:12px;color:#15858f;">21/03/2018</span>
<span class="t" style="left:231.60px;top:833.72px;font-size:11.5px;line-height:12px;transform:scaleX(0.9300);color:#333333;">0,00</span>
<span class="t" style="left:317.60px;top:833.72px;font-size:11.5px;line-height:12px;transform:scaleX(0.9300);color:#333333;">0,00</span>
<span class="t" style="left:355.29px;top:833.72px;font-size:11.5px;line-height:12px;transform:scaleX(0.8040);color:#333333;">TRÉSORERIE</span>
<div class="cb" style="left:448px;top:834.5px"></div>
<span class="t" style="left:588.30px;top:833.72px;font-size:11.5px;line-height:12px;transform:scaleX(0.9300);color:#333333;">275</span>
<div class="cb" style="left:635px;top:834.5px"></div>
<span class="t" style="left:1002.88px;top:833.72px;font-size:11.5px;line-height:12px;transform:scaleX(0.9178);color:#333333;">AAAAH</span>
<span class="t" style="left:1073.92px;top:833.72px;font-size:11.5px;line-height:12px;transform:scaleX(1.0092);color:#333333;">21/03/2018</span>
<span class="t" style="left:86.92px;top:855.72px;font-size:11.5px;line-height:12px;color:#15858f;">21/03/2018</span>
<span class="t" style="left:231.60px;top:855.72px;font-size:11.5px;line-height:12px;transform:scaleX(0.9300);color:#333333;">0,00</span>
<span class="t" style="left:317.60px;top:855.72px;font-size:11.5px;line-height:12px;transform:scaleX(0.9300);color:#333333;">0,00</span>
<div class="cb" style="left:448px;top:856.5px"></div>
<span class="t" style="left:588.39px;top:855.72px;font-size:11.5px;line-height:12px;transform:scaleX(0.9300);color:#333333;">277</span>
<div class="cb" style="left:635px;top:856.5px"></div>
<span class="t" style="left:1002.88px;top:855.72px;font-size:11.5px;line-height:12px;transform:scaleX(0.9178);color:#333333;">AAAAH</span>
<span class="t" style="left:1073.92px;top:855.72px;font-size:11.5px;line-height:12px;transform:scaleX(1.0092);color:#333333;">21/03/2018</span>

<!-- menu -->
<div id="menu"></div>
<!-- icon 1: ecritures ouvertes -->
<svg class="ic" style="left:64px;top:166px" width="20" height="20" viewBox="0 0 20 20" fill="none" stroke="#0f7c87"><path d="M5.8 3.6 H11.5 L14.3 6.3 V15.5" stroke-width="0.9"/><path d="M11.6 3.8 V6.3 H14.4" stroke-width="0.9"/><path d="M4.3 8.5 C4.5 7.2 5.5 7 7.5 7" stroke-width="1"/><path d="M7.3 5.3 L9.3 7.2 L7.3 9.1 Z" fill="#0f7c87" stroke-width="0.5"/><path d="M10.8 8.5 H13.5" stroke-width="0.8"/><rect x="4.5" y="10.4" width="8.2" height="5" stroke-width="1.1"/><path d="M6 12.5 H8.8 M9.8 12.5 H10.6" stroke-width="0.9"/></svg>
<!-- icon 2: delettrer -->
<svg class="ic" style="left:64px;top:196px" width="20" height="20" viewBox="0 0 20 20" fill="none" stroke="#0f7c87"><path d="M5.4 5.5 C5.9 7.4 7.6 7.2 10.2 7" stroke-width="1.6" stroke-linecap="round"/><path d="M8.8 5 L10.9 7.1 L8.5 9.4" stroke-width="1.6" stroke-linecap="round" stroke-linejoin="round"/><circle cx="12.8" cy="12.8" r="3.5" fill="#0f7c87" stroke="none"/><path d="M11.5 11.5 L14.1 14.1 M14.1 11.5 L11.5 14.1" stroke="#fff" stroke-width="0.8"/></svg>
<!-- icon 3: transaction contre-passee -->
<svg class="ic" style="left:64px;top:227px" width="20" height="20" viewBox="0 0 20 20" fill="none" stroke="#0f7c87"><path d="M5.5 4.8 V7.5 M6 4.7 H9.7 M7 6.2 H9.7" stroke-width="0.9" stroke="#6fb0b7"/><path d="M11.5 4.5 V6.5 H16.5 M13.4 5.2 C13.8 3.8 16 3.6 16.5 5.5" stroke-width="1"/><path d="M7.5 8.3 H10.3 V11.3 M12.5 8.3 H15.8 V13.8 H13.5 M12.5 11.3 H14.8" stroke-width="0.9"/><path d="M5.2 10.2 H7.8 M4.5 11.6 H8.3 M5.5 12.6 H6.6 M5 13.6 H6.3" stroke-width="0.9"/><path d="M8.5 13.6 H11.6 M8.5 15.1 H11.6" stroke-width="0.9"/></svg>
<!-- icon 4: mettre a jour previsions -->
<svg class="ic" style="left:64px;top:257px" width="20" height="20" viewBox="0 0 20 20" fill="none" stroke="#0f7c87"><path d="M4.4 8.8 V5.2 H10.8" stroke-width="1"/><path d="M5.2 10.8 C7.5 8.2 9 7.6 11 7.4 C12.5 7.2 13 5.8 13.6 5" stroke-width="1.1"/><path d="M12.3 4.2 H15.1 L14.5 6.5 Z" fill="#0f7c87" stroke-width="0.6"/><path d="M16.5 5.8 V13.6 H13.3 M10.2 10.5 H14.8 M13.3 8.6 H14.5" stroke-width="1"/><path d="M5 12.4 H6.5 M4.5 13.5 H5.5" stroke-width="0.8"/><path d="M8.3 13.5 H11.3 M8.3 15.3 H11" stroke-width="0.9"/></svg>
<!-- icon 5: document entrant -->
<svg class="ic" style="left:64px;top:287px" width="20" height="20" viewBox="0 0 20 20" fill="none" stroke="#0f7c87"><path d="M5.4 14.8 V4.3 H10.8" stroke-width="0.9"/><path d="M6.6 5.5 H11.5 L14.7 8.4 V16.4 H6.6 Z" stroke-width="0.9" stroke="#5ea6ad"/><path d="M6.8 16.4 H14.6" stroke-width="1"/><path d="M12.5 6.5 V8.3 H14.6" stroke-width="1"/></svg>
<!-- icon 6: calcul code lettrage -->
<svg class="ic" style="left:64px;top:318px" width="20" height="20" viewBox="0 0 20 20" fill="none" stroke="#0f7c87"><path d="M14.7 6 V4.5 H5.3 V14.3 H7.5" stroke-width="1.1"/><path d="M7.3 8.4 H12.6 M7.3 10.5 H10.2" stroke-width="0.9"/><path d="M10.8 14 L14 10.8" stroke-width="2.7"/><path d="M9.2 15.6 L11 13.8" stroke-width="1.4"/><circle cx="16" cy="9.1" r="1.15" fill="#0f7c87" stroke="none"/></svg>
<!-- icon 7: initialisation -->
<svg class="ic" style="left:64px;top:348px" width="20" height="20" viewBox="0 0 20 20" fill="none" stroke="#0f7c87"><circle cx="8" cy="7.5" r="3.4" fill="#0f7c87" stroke="none"/><path d="M6.5 6.3 L9.5 8.7 M9.5 6.3 L6.5 8.7" stroke="#fff" stroke-width="0.7"/><path d="M12.3 5.4 H15 V7.5" stroke-width="1"/><path d="M5.4 11.8 V14.2 H7.6" stroke-width="1"/><path d="M10.9 14 L13.9 11" stroke-width="2.7"/><path d="M9.2 15.5 L11 13.7" stroke-width="1.4"/><circle cx="15.9" cy="9.3" r="1.15" fill="#0f7c87" stroke="none"/></svg>
<svg class="ic" style="left:283px;top:290px" width="12" height="14" viewBox="0 0 12 14"><path d="M3 2 L8 7 L3 12" fill="none" stroke="#8a8a8a" stroke-width="0.9"/></svg>
<span class="t mz" style="left:83.70px;top:170.08px;font-size:11.9px;line-height:12px;transform:scaleX(0.9175);color:#303030;">Ecritures ouvertes</span>
<span class="t mz" style="left:83.70px;top:199.88px;font-size:11.9px;line-height:12px;transform:scaleX(0.9211);color:#303030;">Délettrer les écritures...</span>
<span class="t mz" style="left:84.36px;top:230.68px;font-size:11.9px;line-height:12px;transform:scaleX(0.9060);color:#303030;">Transaction contre-passée...</span>
<span class="t mz" style="left:83.68px;top:260.78px;font-size:11.9px;line-height:12px;transform:scaleX(0.9417);color:#303030;">Mettre à jour les prévisions de paiement</span>
<span class="t mz" style="left:83.67px;top:290.68px;font-size:11.9px;line-height:12px;transform:scaleX(0.9569);color:#303030;">Document entrant</span>
<span class="t mz" style="left:84.03px;top:321.48px;font-size:11.9px;line-height:12px;transform:scaleX(0.9352);color:#303030;">Calcul code lettrage</span>
<span class="t mz" style="left:83.55px;top:351.58px;font-size:11.9px;line-height:12px;transform:scaleX(0.9573);color:#303030;">Initialisation code lettrage</span>

<!-- dialog -->
<div id="dlg"></div>
<div id="q"></div>
<svg class="abs" style="left:539px;top:414px;z-index:12" width="24" height="24" viewBox="0 0 24 24"><path d="M9.1 8.9 C9.1 6.9 10.5 6.1 12.2 6.1 C14 6.1 15.3 7.1 15.3 8.8 C15.3 10.4 14.3 11 13.2 11.9 C12.2 12.7 11.9 13.3 11.9 15.3" fill="none" stroke="#fff" stroke-width="1.7"/><rect x="11" y="16.9" width="1.9" height="1.5" fill="#fff"/></svg>
<div class="abs dashmark" style="left:883px;top:525px;width:32px;height:1px;z-index:11;background:repeating-linear-gradient(to right,#555 0,#555 4px,transparent 4px,transparent 7px)"></div>
<div class="btn" id="oui"></div>
<div class="btn" id="non"></div>
<span class="t dz" style="left:575.29px;top:415.72px;font-size:11.2px;line-height:11px;transform:scaleX(0.9758);color:#333;">Initialiser les codes lettrages depuis le code AAAAE ?</span>
<span class="t dz" style="left:790.11px;top:485.22px;font-size:11.2px;line-height:11px;transform:scaleX(1.1150);color:#333;">Oui</span>
<span class="t dz" style="left:860.66px;top:485.22px;font-size:11.2px;line-height:11px;transform:scaleX(1.1270);color:#333;">Non</span>

<!-- callouts -->
<svg class="call" style="left:0;top:333px" width="72" height="52" viewBox="0 0 72 52">
 <defs><filter id="sh" x="-20%" y="-20%" width="140%" height="160%"><feGaussianBlur in="SourceAlpha" stdDeviation="2"/><feOffset dx="1" dy="3"/><feComponentTransfer><feFuncA type="linear" slope="0.45"/></feComponentTransfer><feMerge><feMergeNode/><feMergeNode in="SourceGraphic"/></feMerge></filter></defs>
 <path d="M21.5 4 A20.5 20.5 0 0 1 31.5 6.7 L64 24.5 L31.5 42.3 A20.5 20.5 0 1 1 21.5 4 Z" fill="#0fae8e" filter="url(#sh)"/>
</svg>
<svg class="call" style="left:706px;top:466px" width="72" height="52" viewBox="0 0 72 52">
 <path d="M21.5 4 A20.5 20.5 0 0 1 31.5 6.7 L64 24.5 L31.5 42.3 A20.5 20.5 0 1 1 21.5 4 Z" fill="#0fae8e" filter="url(#sh)"/>
</svg>
<svg class="abs" style="left:0;top:340px;z-index:21" width="40" height="30" viewBox="0 340 40 30"><path d="M26.1 350 H28.5 V366.1 H26.1 V353.2 L21.9 356.2 V353.6 Z" fill="#fff"/></svg><span class="t cz" style="left:724.75px;top:479.06px;font-size:23.5px;line-height:24px;transform:scaleX(1.0555);color:#fff;">2</span>
</body></html>
